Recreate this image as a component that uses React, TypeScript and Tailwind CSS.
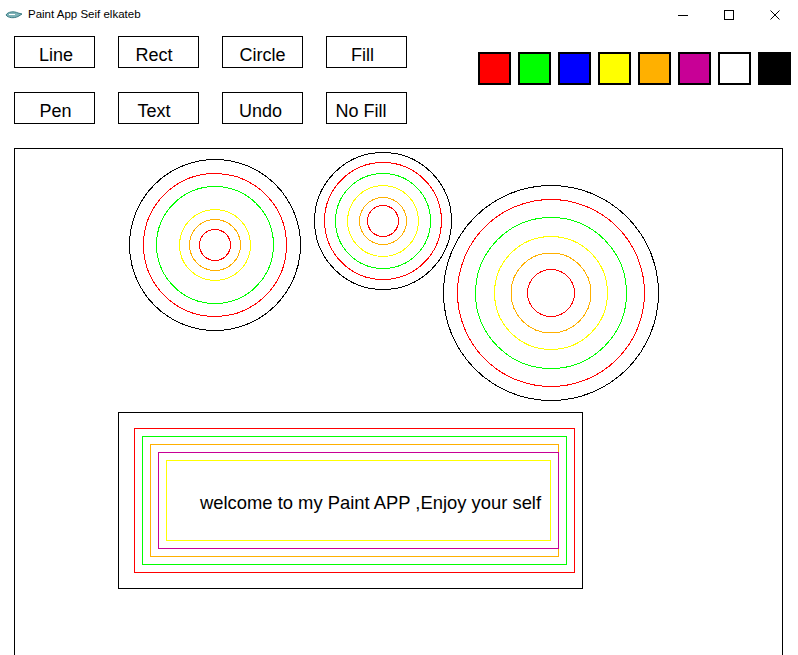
import React from 'react';

// Java's button labels are not centred exactly; small per-button shifts
const tools: { label: string; pad: string }[] = [
  { label: 'Line', pad: 'pl-[3px]' },
  { label: 'Rect', pad: 'pr-[9px]' },
  { label: 'Circle', pad: '' },
  { label: 'Fill', pad: 'pr-[8px]' },
  { label: 'Pen', pad: 'pl-[2px]' },
  { label: 'Text', pad: 'pr-[9px]' },
  { label: 'Undo', pad: 'pr-[4px]' },
  { label: 'No Fill', pad: 'pr-[11px]' },
];

const swatches = [
  'bg-[#ff0000]',
  'bg-[#00ff00]',
  'bg-[#0000ff]',
  'bg-[#ffff00]',
  'bg-[#ffb000]',
  'bg-[#c80096]',
  'bg-white',
  'bg-black',
];

const ringColors = ['#000000', '#ff0000', '#00ff00', '#ffff00', '#ffb000', '#ff0000'];

const circles: { cx: number; cy: number; radii: number[] }[] = [
  { cx: 215, cy: 245, radii: [85.5, 71.5, 58.5, 35.5, 25.5, 15.5] },
  { cx: 383, cy: 221, radii: [68.5, 58.5, 47.5, 35.5, 23.5, 15.5] },
  { cx: 551, cy: 293, radii: [107.5, 93.5, 75.5, 56.5, 40, 23.5] },
];

// left, top, right, bottom in page pixels
const rects: { l: number; t: number; r: number; b: number; color: string }[] = [
  { l: 118, t: 412, r: 582, b: 588, color: '#000000' },
  { l: 134, t: 428, r: 574, b: 572, color: '#ff0000' },
  { l: 142, t: 436, r: 566, b: 564, color: '#00ff00' },
  { l: 150, t: 444, r: 558, b: 556, color: '#ffb000' },
  { l: 158, t: 452, r: 558, b: 548, color: '#c80096' },
  { l: 166, t: 460, r: 550, b: 540, color: '#ffff00' },
];

function AppIcon() {
  return (
    <svg width="18" height="10" viewBox="0 0 18 10">
      <path d="M1 5 C3 1.5 9 1 13 3 L17 4 L13 6.5 C9 8.5 3 8 1 5 Z" fill="#7fb3b8" stroke="#3d7d86" strokeWidth="1" />
      <path d="M4 4.5 L10 4.5" stroke="#ffffff" strokeWidth="1" />
    </svg>
  );
}

function TitleBar() {
  return (
    <div className="flex h-[30px] items-center bg-white">
      <div className="ml-[5px] flex w-[20px] items-center">
        <AppIcon />
      </div>
      <span className="ml-[3px] text-[11.5px] text-black [font-family:'Liberation_Sans',Arial,sans-serif]">
        Paint App Seif elkateb
      </span>
      <div className="ml-auto flex h-full">
        <div className="flex w-[46px] items-center justify-center">
          <div className="h-px w-[10px] bg-black" />
        </div>
        <div className="flex w-[46px] items-center justify-center">
          <div className="h-[10px] w-[10px] border border-black" />
        </div>
        <div className="flex w-[46px] items-center justify-center">
          <svg width="10" height="10" viewBox="0 0 10 10">
            <path d="M0.5 0.5 L9.5 9.5 M9.5 0.5 L0.5 9.5" stroke="#000" strokeWidth="1" />
          </svg>
        </div>
      </div>
    </div>
  );
}

function Canvas() {
  return (
    <div className="mt-[24px] h-[520px] w-[769px] border border-black bg-white">
      <svg width="767" height="518" viewBox="15 149 767 518" className="block">
        {circles.map((c, i) =>
          c.radii.map((r, j) => (
            <circle
              key={`${i}-${j}`}
              cx={c.cx}
              cy={c.cy}
              r={r}
              fill="none"
              stroke={ringColors[j]}
              strokeWidth="1"
              shapeRendering="crispEdges"
            />
          ))
        )}
        {rects.map((rc, i) => (
          <rect
            key={i}
            x={rc.l + 0.5}
            y={rc.t + 0.5}
            width={rc.r - rc.l}
            height={rc.b - rc.t}
            fill="none"
            stroke={rc.color}
            strokeWidth="1"
            shapeRendering="crispEdges"
          />
        ))}
        <text
          x="200"
          y="509"
          fontSize="18.4"
          fill="#000"
          style={{ fontFamily: "'Liberation Sans', Arial, sans-serif" }}
        >
          welcome to my Paint APP ,Enjoy your self
        </text>
      </svg>
    </div>
  );
}

export default function App() {
  return (
    <div className="h-[655px] w-[798px] overflow-hidden bg-white">
      <TitleBar />
      <div className="pl-[14px]">
        <div className="flex">
          <div className="mt-[6px] grid grid-cols-[repeat(4,81px)] gap-x-[23px] gap-y-[24px]">
            {tools.map((t) => (
              <button
                key={t.label}
                className={`flex h-[32px] items-center justify-center border border-black bg-white pt-[6px] text-[18px] text-black [font-family:'Liberation_Sans',Arial,sans-serif] ${t.pad}`}
              >
                {t.label}
              </button>
            ))}
          </div>
          <div className="ml-[71px] mt-[22px] flex gap-[7px] self-start">
            {swatches.map((s, i) => (
              <div key={i} className={`h-[33px] w-[33px] border-2 border-black ${s}`} />
            ))}
          </div>
        </div>
        <Canvas />
      </div>
    </div>
  );
}
